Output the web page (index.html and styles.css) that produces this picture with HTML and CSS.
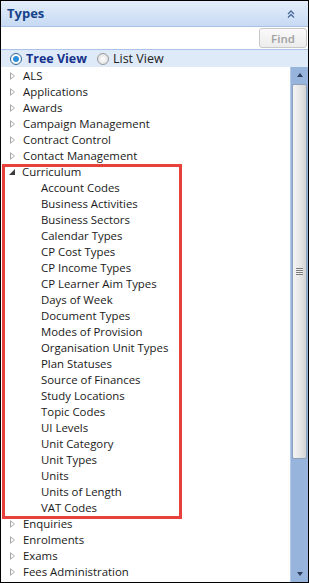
FILE: index.html
```html
<!DOCTYPE html>
<html lang="en">
<head>
    <meta charset="UTF-8">
    <title>Types</title>
    <link rel="stylesheet" href="styles.css">
</head>
<body>
    <div class="panel">
        <div class="header">
            <span class="title">Types</span>
            <svg class="collapse" width="10" height="10" viewBox="0 0 10 10">
                <path d="M2 5 L5 2 L8 5 M2 8.5 L5 5.5 L8 8.5" fill="none" stroke="#4a6a9a" stroke-width="1.3"/>
            </svg>
        </div>

        <div class="search">
            <input type="text" class="search-box">
            <button class="find">Find</button>
        </div>

        <div class="views">
            <label class="view active"><span class="radio on"></span>Tree View</label>
            <label class="view"><span class="radio"></span>List View</label>
        </div>

        <div class="tree-wrap">
            <ul class="tree" id="tree"></ul>
            <div class="scrollbar">
                <div class="arrow up"></div>
                <div class="thumb"><span class="grip"></span></div>
                <div class="track"></div>
                <div class="arrow down"></div>
            </div>
        </div>
    </div>

    <script>
        const before = ["ALS", "Applications", "Awards", "Campaign Management", "Contract Control", "Contact Management"];
        const children = ["Account Codes", "Business Activities", "Business Sectors", "Calendar Types", "CP Cost Types",
            "CP Income Types", "CP Learner Aim Types", "Days of Week", "Document Types", "Modes of Provision",
            "Organisation Unit Types", "Plan Statuses", "Source of Finances", "Study Locations", "Topic Codes",
            "UI Levels", "Unit Category", "Unit Types", "Units", "Units of Length", "VAT Codes"];
        const after = ["Enquiries", "Enrolments", "Exams", "Fees Administration"];
        const tree = document.getElementById("tree");

        function node(text, cls) {
            const li = document.createElement("li");
            li.className = "node " + cls;
            const t = document.createElement("span");
            t.className = "toggle";
            li.appendChild(t);
            li.appendChild(document.createTextNode(text));
            return li;
        }

        before.forEach(n => tree.appendChild(node(n, "closed")));

        // expanded group, outlined in red
        const group = document.createElement("li");
        group.className = "group";
        group.appendChild(node("Curriculum", "open"));
        const sub = document.createElement("ul");
        sub.className = "children";
        children.forEach(c => {
            const li = document.createElement("li");
            li.className = "leaf";
            li.textContent = c;
            sub.appendChild(li);
        });
        group.appendChild(sub);
        tree.appendChild(group);

        after.forEach(n => tree.appendChild(node(n, "closed")));
    </script>
</body>
</html>
```

FILE: styles.css
```css
body {
    margin: 0;
    padding: 0;
    background: #ffffff;
    font-family: 'Open Sans', 'Noto Sans', sans-serif;
}

.panel {
    width: 309px;
    height: 583px;
    box-sizing: border-box;
    border: 1px solid #000000;
    display: flex;
    flex-direction: column;
    overflow: hidden;
}

.header {
    height: 25px;
    display: flex;
    align-items: center;
    justify-content: space-between;
    padding: 0 12px 0 6px;
    background: linear-gradient(#e4eefb, #c7daf3);
    border-bottom: 1px solid #a8c1e4;
}

.title {
    font-size: 13px;
    font-weight: bold;
    color: #15428b;
    margin-top: -1px;
}

.search {
    height: 22px;
    display: flex;
    align-items: center;
    border-bottom: 1px solid #a9c3e6;
}

.search-box {
    flex: 1;
    border: none;
    height: 20px;
    padding: 0;
    outline: none;
}

.find {
    width: 48px;
    height: 20px;
    margin-right: 1px;
    border: 1px solid #c8c8c8;
    border-radius: 3px;
    background: linear-gradient(#fafafa, #ececec);
    color: #a0a0a0;
    font-family: 'Open Sans', sans-serif;
    font-size: 11.5px;
    font-weight: 600;
    padding: 0;
}

.views {
    height: 17px;
    display: flex;
    align-items: center;
    gap: 10px;
    padding-left: 9px;
    background: #dfeaf8;
}

.view {
    display: flex;
    align-items: center;
    gap: 4px;
    font-size: 12.5px;
    color: #222222;
}

.view.active {
    font-weight: bold;
    color: #15318b;
}

.radio {
    width: 10px;
    height: 10px;
    border-radius: 50%;
    border: 1px solid #9a9a9a;
    background: radial-gradient(#ffffff, #d8d8d8);
}

.radio.on {
    border-color: #3a6a9a;
    background: radial-gradient(circle, #2a8fd8 0 2.5px, #ffffff 3.5px, #dcdcdc);
}

.tree-wrap {
    flex: 1;
    display: flex;
    min-height: 0;
}

.tree {
    flex: 1;
    list-style: none;
    margin: 0;
    padding: 1px 0 0 0;
    overflow: hidden;
}

.tree ul {
    list-style: none;
    margin: 0;
    padding: 0;
}

.node, .leaf {
    height: 16px;
    line-height: 16px;
    font-size: 11.4px;
    color: #1a1a1a;
    white-space: nowrap;
}

.node {
    display: flex;
    align-items: center;
    padding-left: 8px;
}

.toggle {
    width: 0;
    height: 0;
    margin-right: 8px;
    position: relative;
}

.closed .toggle {
    border-top: 4px solid transparent;
    border-bottom: 4px solid transparent;
    border-left: 5px solid #a8a8a8;
    margin-left: 1px;
}

.closed .toggle::after {
    content: '';
    position: absolute;
    left: -4px;
    top: -2.5px;
    border-top: 2.5px solid transparent;
    border-bottom: 2.5px solid transparent;
    border-left: 3px solid #ffffff;
}

.open .toggle {
    border-left: 6px solid transparent;
    border-bottom: 6px solid #3c3c3c;
    margin-right: 7px;
    margin-left: 0;
}

.leaf {
    padding-left: 40px;
}

.group {
    position: relative;
}

.group::after {
    content: '';
    position: absolute;
    top: 0;
    left: 1px;
    width: 174px;
    height: 349px;
    border: 3px solid #e8413b;
}

.scrollbar {
    width: 17px;
    display: flex;
    flex-direction: column;
    background: #97b4dd;
    border-left: 1px solid #b6cbe8;
}

.arrow {
    height: 16px;
    display: flex;
    align-items: center;
    justify-content: center;
}

.arrow.up::before {
    content: '';
    border-left: 3.5px solid transparent;
    border-right: 3.5px solid transparent;
    border-bottom: 4px solid #2d3f5c;
}

.arrow.down::before {
    content: '';
    border-left: 3.5px solid transparent;
    border-right: 3.5px solid transparent;
    border-top: 4px solid #2d3f5c;
}

.thumb {
    height: 373px;
    margin: 1px 1px 0 1px;
    border: 1px solid #8f9fb8;
    border-radius: 2px;
    background: linear-gradient(to right, #f4f4f4, #e4e4e4 60%, #d4d4d4);
    display: flex;
    align-items: center;
    justify-content: center;
}

.grip {
    width: 7px;
    height: 7px;
    background: repeating-linear-gradient(#7a7a7a 0 1px, #f0f0f0 1px 2px);
}

.track {
    flex: 1;
}
```
